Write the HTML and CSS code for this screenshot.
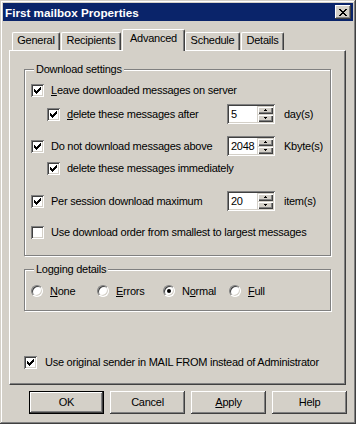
FILE: index.html
```html
<!DOCTYPE html>
<html>
<head>
<meta charset="utf-8">
<link rel="stylesheet" href="styles.css">
</head>
<body>
<div class="window">
  <div class="titlebar">
    <span class="title">First mailbox Properties</span>
    <span class="close"><svg width="8" height="7" viewBox="0 0 8 7"><path d="M0 0h2v1h-2zM6 0h2v1h-2zM1 1h2v1h-2zM5 1h2v1h-2zM2 2h4v1h-4zM3 3h2v1h-2zM2 4h4v1h-4zM1 5h2v1h-2zM5 5h2v1h-2zM0 6h2v1h-2zM6 6h2v1h-2z" fill="#000"/></svg></span>
  </div>
  <div class="tabs">
    <div class="tab t-general">General</div>
    <div class="tab t-recip">Recipients</div>
    <div class="tab t-adv active">Advanced</div>
    <div class="tab t-sched">Schedule</div>
    <div class="tab t-det">Details</div>
  </div>
  <div class="panel">
    <div class="group g-download">
      <span class="legend">Download settings</span>
      <div class="row r1">
        <div class="lead"><span class="cb checked"></span><span class="lbl"><u>L</u>eave downloaded messages on server</span></div>
      </div>
      <div class="row r2">
        <div class="lead indent"><span class="cb checked"></span><span class="lbl"><u>d</u>elete these messages after</span></div>
        <div class="spin"><span class="val">5</span><span class="ud"><span class="udb"><svg width="3" height="2" viewBox="0 0 3 2"><path d="M1 0h1v1h1v1h-3v-1h1z"/></svg></span><span class="udb"><svg width="3" height="2" viewBox="0 0 3 2"><path d="M0 0h3v1h-1v1h-1v-1h-1z"/></svg></span></span></div>
        <span class="unit">day(s)</span>
      </div>
      <div class="row r3">
        <div class="lead"><span class="cb checked"></span><span class="lbl">Do not download messages above</span></div>
        <div class="spin"><span class="val">2048</span><span class="ud"><span class="udb"><svg width="3" height="2" viewBox="0 0 3 2"><path d="M1 0h1v1h1v1h-3v-1h1z"/></svg></span><span class="udb"><svg width="3" height="2" viewBox="0 0 3 2"><path d="M0 0h3v1h-1v1h-1v-1h-1z"/></svg></span></span></div>
        <span class="unit">Kbyte(s)</span>
      </div>
      <div class="row r4">
        <div class="lead indent"><span class="cb checked"></span><span class="lbl">delete these messages immediately</span></div>
      </div>
      <div class="row r5">
        <div class="lead"><span class="cb checked"></span><span class="lbl">Per session download maximum</span></div>
        <div class="spin"><span class="val">20</span><span class="ud"><span class="udb"><svg width="3" height="2" viewBox="0 0 3 2"><path d="M1 0h1v1h1v1h-3v-1h1z"/></svg></span><span class="udb"><svg width="3" height="2" viewBox="0 0 3 2"><path d="M0 0h3v1h-1v1h-1v-1h-1z"/></svg></span></span></div>
        <span class="unit">item(s)</span>
      </div>
      <div class="row r6">
        <div class="lead wide"><span class="cb"></span><span class="lbl">Use download order from smallest to largest messages</span></div>
      </div>
    </div>
    <div class="group g-log">
      <span class="legend">Logging details</span>
      <div class="radios">
        <div class="ritem"><span class="radio"></span><span class="lbl"><u>N</u>one</span></div>
        <div class="ritem"><span class="radio"></span><span class="lbl"><u>E</u>rrors</span></div>
        <div class="ritem"><span class="radio on"></span><span class="lbl">N<u>o</u>rmal</span></div>
        <div class="ritem"><span class="radio"></span><span class="lbl"><u>F</u>ull</span></div>
      </div>
    </div>
    <div class="row bottomcb">
      <span class="cb checked"></span><span class="lbl">Use original sender in MAIL FROM instead of Administrator</span>
    </div>
  </div>
  <div class="buttons">
    <div class="btn default">OK</div>
    <div class="btn">Cancel</div>
    <div class="btn"><span><u>A</u>pply</span></div>
    <div class="btn">Help</div>
  </div>
</div>
</body>
</html>
```

FILE: styles.css
```css
* { box-sizing: border-box; }
html, body { margin: 0; padding: 0; }
body {
  width: 356px;
  height: 424px;
  background: #d4d0c8;
  font-family: "Liberation Sans", Arial, sans-serif;
  font-size: 11px;
  letter-spacing: -0.25px;
  color: #000;
}
u { text-decoration: underline; text-underline-offset: 1px; }
.window {
  width: 356px;
  height: 424px;
  padding: 3px;
  background: #d4d0c8;
  box-shadow: inset -1px -1px #404040, inset 1px 1px #d4d0c8, inset -2px -2px #808080, inset 2px 2px #fff;
  display: flex;
  flex-direction: column;
}
.titlebar {
  height: 18px;
  background: #0a246a;
  display: flex;
  align-items: center;
  justify-content: space-between;
  padding: 0 2px 0 2px;
}
.title {
  color: #fff;
  font-weight: bold;
  font-size: 11.7px;
  letter-spacing: 0;
  line-height: 13px;
}
.close {
  width: 16px;
  height: 14px;
  background: #d4d0c8;
  box-shadow: inset -1px -1px #404040, inset 1px 1px #fff, inset -2px -2px #808080;
  display: flex;
  align-items: center;
  justify-content: center;
}
.close svg { display: block; margin-left: -1px; }
.tabs {
  margin-top: 8px;
  height: 21px;
  display: flex;
  align-items: flex-end;
  padding-left: 9px;
}
.tab {
  height: 18px;
  border-top: 1px solid #fff;
  border-left: 1px solid #fff;
  border-right: 1px solid #404040;
  border-radius: 2px 2px 0 0;
  box-shadow: inset -1px 0 #808080;
  text-align: center;
  line-height: 15px;
  background: #d4d0c8;
}
.t-general { width: 48px; }
.t-recip { width: 60px; margin-left: 1px; }
.t-adv { width: 63px; margin-left: 1px; }
.t-sched { width: 55px; }
.t-det { width: 43px; margin-left: 1px; }
.tab.active {
  height: 22px;
  margin-bottom: -1px;
  position: relative;
  z-index: 1;
  line-height: 17px;
}
.panel {
  margin-left: 6px;
  width: 337px;
  height: 335px;
  border-top: 1px solid #fff;
  border-left: 1px solid #fff;
  border-right: 1px solid #404040;
  border-bottom: 1px solid #404040;
  box-shadow: inset -1px -1px #808080;
  display: flex;
  flex-direction: column;
  align-items: flex-start;
}
.group {
  margin-left: 14px;
  width: 307px;
  border: 1px solid #808080;
  box-shadow: inset 1px 1px #fff, 1px 1px #fff;
  padding-left: 6px;
  display: flex;
  flex-direction: column;
  align-items: flex-start;
}
.g-download { margin-top: 18px; padding-bottom: 16px; }
.g-log { margin-top: 13px; padding-bottom: 13px; }
.legend {
  display: block;
  height: 13px;
  line-height: 13px;
  margin: -7px 0 0 3px;
  padding: 0 2px;
  background: #d4d0c8;
}
.row {
  display: flex;
  align-items: center;
}
.lead {
  width: 196px;
  display: flex;
  align-items: center;
}
.lead.wide { width: auto; }
.lead.indent { padding-left: 16px; }
.lbl { line-height: 13px; margin-left: 7px; white-space: nowrap; }
.r1 { margin-top: 8px; height: 13px; }
.r2 { margin-top: 7px; height: 20px; }
.r3 { margin-top: 12px; height: 20px; }
.r4 { margin-top: 6px; height: 13px; }
.r5 { margin-top: 16px; height: 20px; }
.r6 { margin-top: 15px; height: 13px; }
.cb {
  flex: none;
  width: 13px;
  height: 13px;
  background: #fff;
  box-shadow: inset 1px 1px #808080, inset -1px -1px #fff, inset 2px 2px #404040, inset -2px -2px #d4d0c8;
  display: block;
}
.cb.checked {
  background: #fff url("data:image/svg+xml;utf8,<svg xmlns='http://www.w3.org/2000/svg' width='7' height='7' viewBox='0 0 7 7'><path d='M0 2h1v3h-1zM1 3h1v3h-1zM2 4h1v3h-1zM3 3h1v3h-1zM4 2h1v3h-1zM5 1h1v3h-1zM6 0h1v3h-1z' fill='black'/></svg>") no-repeat 3px 3px;
}
.spin {
  width: 48px;
  height: 20px;
  display: flex;
  padding: 2px;
  background: #fff;
  box-shadow: inset 1px 1px #808080, inset -1px -1px #fff, inset 2px 2px #404040, inset -2px -2px #d4d0c8;
}
.val {
  flex: 1;
  line-height: 16px;
  padding-left: 2px;
}
.ud {
  width: 16px;
  display: flex;
  flex-direction: column;
}
.udb {
  height: 8px;
  background: #d4d0c8;
  box-shadow: inset 1px 1px #d4d0c8, inset 2px 2px #fff, inset -1px -1px #404040, inset -2px -2px #808080;
  display: flex;
  align-items: center;
  justify-content: center;
}
.udb svg { display: block; fill: #000; }
.unit { margin-left: 9px; line-height: 13px; }
.radios {
  margin-top: 9px;
  height: 12px;
  display: flex;
  align-items: center;
}
.ritem {
  width: 66px;
  display: flex;
  align-items: center;
}
.radio {
  flex: none;
  width: 12px;
  height: 12px;
  border-radius: 50%;
  background: #fff;
  border: 1px solid;
  border-color: #808080 #fff #fff #808080;
  box-shadow: inset 1px 1px #404040, inset -1px -1px #d4d0c8;
  display: flex;
  align-items: center;
  justify-content: center;
}
.radio.on::after {
  content: "";
  width: 4px;
  height: 4px;
  border-radius: 50%;
  background: #000;
}
.ritem .lbl { margin-left: 7px; }
.bottomcb { margin-left: 14px; margin-top: 45px; height: 13px; }
.bottomcb .lbl { margin-left: 8px; }
.buttons {
  margin-top: 6px;
  margin-left: 26px;
  display: flex;
  gap: 6px;
}
.btn {
  width: 75px;
  height: 23px;
  background: #d4d0c8;
  box-shadow: inset -1px -1px #404040, inset 1px 1px #fff, inset -2px -2px #808080;
  display: flex;
  align-items: center;
  justify-content: center;
  line-height: 13px;
}
.btn.default {
  border: 1px solid #000;
}
```
